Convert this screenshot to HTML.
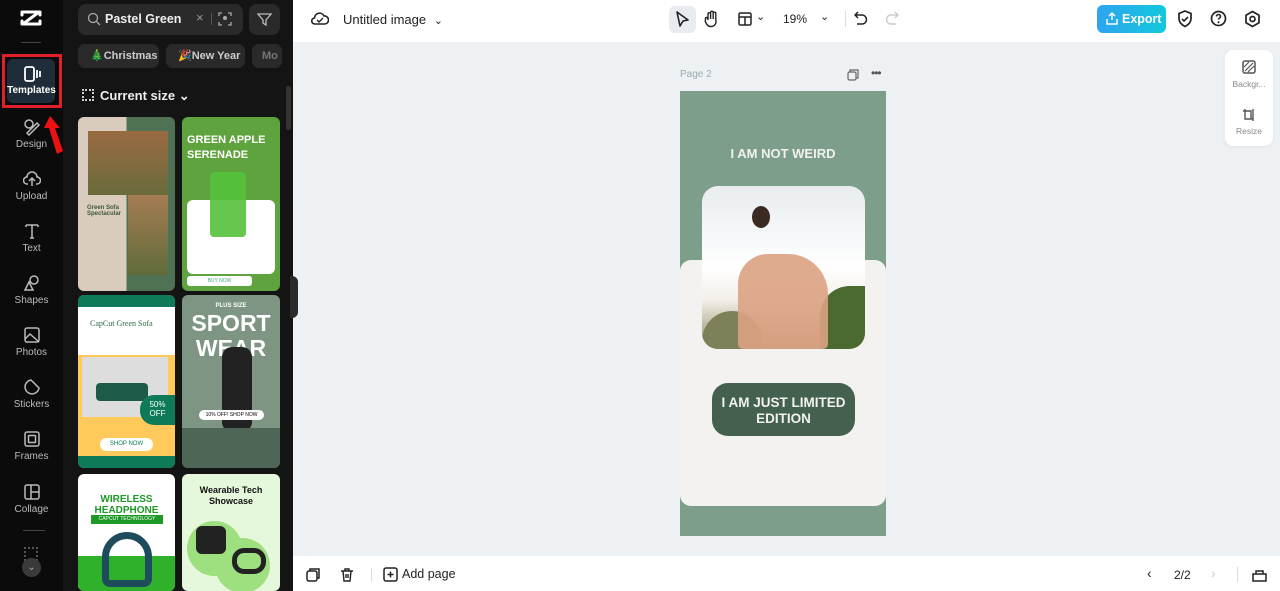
<!DOCTYPE html>
<html><head><meta charset="utf-8"><style>
*{box-sizing:border-box;margin:0;padding:0}
body{width:1280px;height:591px;overflow:hidden;font-family:"Liberation Sans",sans-serif;background:#eef1f4;position:relative}
.a{position:absolute}
.side{left:0;top:0;width:63px;height:591px;background:#0b0b0b}
.panel{left:63px;top:0;width:230px;height:591px;background:#141414}
.nav{position:absolute;left:0;width:63px;text-align:center;color:#bbb;font-size:10px}
.nav svg{display:block;margin:0 auto 3px}
.chip{position:absolute;top:44px;height:24px;background:#2a2a2a;border-radius:7px;color:#ccc;font-size:11px;font-weight:bold;line-height:24px;padding-left:12px}
.card{position:absolute;border-radius:6px;overflow:hidden}
.top{left:293px;top:0;width:987px;height:42px;background:#fff}
.bot{left:293px;top:556px;width:987px;height:35px;background:#fff}
</style></head><body>
<div class="a side"></div>
<div class="a panel"></div>
<!-- logo -->
<svg class="a" style="left:19px;top:9px" width="24" height="18" viewBox="0 0 24 18"><path d="M4 3h16L4 15h16" stroke="#fff" stroke-width="3" fill="none" stroke-linejoin="round"/><path d="M3 3v3M21 3v3M3 15v-3M21 15v-3" stroke="#fff" stroke-width="3" stroke-linecap="round"/></svg>
<div class="a" style="left:21px;top:42px;width:20px;height:1px;background:#444"></div>
<!-- templates active -->
<div class="a" style="left:2px;top:54px;width:60px;height:54px;border:3px solid #e0202a"></div>
<div class="a" style="left:7px;top:59px;width:48px;height:44px;background:#1f2d3a;border-radius:6px"></div>
<div class="nav" style="top:66px;color:#fff;font-weight:bold"><svg width="18" height="16" viewBox="0 0 18 16"><rect x="2" y="1" width="9" height="14" rx="2" stroke="#fff" stroke-width="1.8" fill="none"/><path d="M14 4v8M17 5v6" stroke="#fff" stroke-width="1.8"/></svg>Templates</div>
<svg class="a" style="left:44px;top:114px" width="24" height="42" viewBox="0 0 24 42"><path d="M6 2L0 14h5l8 26 6-3-8-23h5z" fill="#e11"/></svg>
<div class="nav" style="top:118px;width:63px">
<svg width="18" height="18" viewBox="0 0 18 18"><circle cx="6" cy="6" r="4" stroke="#bbb" stroke-width="1.5" fill="none"/><path d="M4 15l10-10 2 2-10 10z" stroke="#bbb" stroke-width="1.5" fill="none"/></svg>Design</div>
<div class="nav" style="top:170px"><svg width="18" height="18" viewBox="0 0 18 18"><path d="M5 14H4a3 3 0 010-7 5 5 0 0110 0 3 3 0 010 7h-1M9 16V9M6 11l3-3 3 3" stroke="#bbb" stroke-width="1.5" fill="none"/></svg>Upload</div>
<div class="nav" style="top:222px"><svg width="18" height="18" viewBox="0 0 18 18"><path d="M3 3h12M9 3v13M3 3v2M15 3v2M7 16h4" stroke="#bbb" stroke-width="1.5" fill="none"/></svg>Text</div>
<div class="nav" style="top:274px"><svg width="18" height="18" viewBox="0 0 18 18"><circle cx="11" cy="6" r="4" stroke="#bbb" stroke-width="1.5" fill="none"/><path d="M6 8l-4 8h8z" stroke="#bbb" stroke-width="1.5" fill="none"/></svg>Shapes</div>
<div class="nav" style="top:326px"><svg width="18" height="18" viewBox="0 0 18 18"><rect x="2" y="2" width="14" height="14" rx="2" stroke="#bbb" stroke-width="1.5" fill="none"/><path d="M2 13l5-5 9 8" stroke="#bbb" stroke-width="1.5" fill="none"/></svg>Photos</div>
<div class="nav" style="top:378px"><svg width="18" height="18" viewBox="0 0 18 18"><path d="M16 10A7 7 0 118 2z" stroke="#bbb" stroke-width="1.5" fill="none"/></svg>Stickers</div>
<div class="nav" style="top:430px"><svg width="18" height="18" viewBox="0 0 18 18"><rect x="2" y="2" width="14" height="14" rx="2" stroke="#bbb" stroke-width="1.5" fill="none"/><rect x="5.5" y="5.5" width="7" height="7" rx="1" stroke="#bbb" stroke-width="1.5" fill="none"/></svg>Frames</div>
<div class="nav" style="top:483px"><svg width="18" height="18" viewBox="0 0 18 18"><rect x="2" y="2" width="14" height="14" rx="2" stroke="#bbb" stroke-width="1.5" fill="none"/><path d="M8 2v14M8 9h8" stroke="#bbb" stroke-width="1.5"/></svg>Collage</div>
<div class="a" style="left:23px;top:530px;width:22px;height:1px;background:#444"></div>
<div class="a" style="left:24px;top:547px;width:14px;height:14px;border:2px dotted #555"></div>
<div class="a" style="left:22px;top:558px;width:19px;height:19px;border-radius:50%;background:#3a3a3a;color:#aaa;font-size:10px;text-align:center;line-height:19px">⌄</div>
<!-- search -->
<div class="a" style="left:78px;top:4px;width:165px;height:31px;background:#2a2a2a;border-radius:8px"></div>
<svg class="a" style="left:87px;top:12px" width="14" height="14" viewBox="0 0 14 14"><circle cx="6" cy="6" r="4.5" stroke="#aaa" stroke-width="1.3" fill="none"/><path d="M9.5 9.5L13 13" stroke="#aaa" stroke-width="1.3"/></svg>
<div class="a" style="left:105px;top:12px;color:#eee;font-size:12.5px;font-weight:bold">Pastel Green</div>
<div class="a" style="left:196px;top:10px;color:#999;font-size:13px">×</div>
<div class="a" style="left:211px;top:13px;width:1px;height:12px;background:#555"></div>
<svg class="a" style="left:218px;top:12px" width="14" height="14" viewBox="0 0 14 14"><path d="M1 4V1h3M10 1h3v3M13 10v3h-3M4 13H1v-3" stroke="#aaa" stroke-width="1.3" fill="none"/><circle cx="7" cy="6" r="2" fill="#aaa"/></svg>
<div class="a" style="left:249px;top:4px;width:31px;height:31px;background:#2a2a2a;border-radius:8px"></div>
<svg class="a" style="left:257px;top:12px" width="15" height="15" viewBox="0 0 15 15"><path d="M1 2h13l-5 6v5l-3-2V8z" stroke="#bbb" stroke-width="1.3" fill="none"/></svg>
<div class="chip" style="left:78px;width:81px">🎄Christmas</div>
<div class="chip" style="left:166px;width:79px">🎉New Year</div>
<div class="chip" style="left:252px;width:30px;color:#777;padding-left:10px">Mo</div>
<div class="a" style="left:82px;top:89px;width:12px;height:12px;border:2px dotted #ccc"></div>
<div class="a" style="left:100px;top:88px;color:#eee;font-size:13px;font-weight:bold">Current size ⌄</div>
<div class="a" style="left:286px;top:86px;width:5px;height:44px;background:#333;border-radius:3px"></div>
<div class="a" style="left:290px;top:276px;width:8px;height:42px;background:#2a2a2a;border-radius:0 6px 6px 0"></div>
<!-- cards -->
<div class="card" style="left:78px;top:117px;width:97px;height:174px;background:linear-gradient(90deg,#d9cbbd 50%,#4f7254 50%)">
 <div class="a" style="left:10px;top:14px;width:80px;height:64px;background:linear-gradient(#9a6b43,#6a6b3c)"></div>
 <div class="a" style="left:50px;top:78px;width:40px;height:80px;background:linear-gradient(#a67c54,#5f6c3a)"></div>
 <div class="a" style="left:9px;top:88px;font-size:6px;font-weight:bold;color:#3c5a3c">Green Sofa<br>Spectacular</div>
</div>
<div class="card" style="left:182px;top:117px;width:98px;height:174px;background:#5ea33d">
 <div class="a" style="left:5px;top:16px;color:#fff;font-size:11px;font-weight:bold;line-height:15px">GREEN APPLE<br>SERENADE</div>
 <div class="a" style="left:5px;top:83px;width:88px;height:74px;background:#fff;border-radius:6px"></div>
 <div class="a" style="left:28px;top:55px;width:36px;height:65px;background:#54c13a;border-radius:4px;opacity:.9"></div>
 <div class="a" style="left:5px;top:159px;width:65px;height:10px;background:#fff;border-radius:3px;font-size:5px;text-align:center;line-height:10px;color:#4a8">BUY NOW</div>
</div>
<div class="card" style="left:78px;top:295px;width:97px;height:173px;background:#ffc95c">
 <div class="a" style="left:0;top:0;width:97px;height:12px;background:#0e7a5a"></div>
 <div class="a" style="left:0;top:12px;width:97px;height:48px;background:#fff"></div>
 <div class="a" style="left:12px;top:24px;color:#2a6b45;font-size:8px;font-family:'Liberation Serif',serif">CapCut Green Sofa</div>
 <div class="a" style="left:4px;top:62px;width:86px;height:60px;background:#ddd"></div>
 <div class="a" style="left:18px;top:88px;width:52px;height:18px;background:#1e5a4a;border-radius:4px"></div>
 <div class="a" style="left:62px;top:100px;width:35px;height:30px;background:#0e7a5a;border-radius:14px 0 0 14px;color:#fff;font-size:8px;text-align:center;padding-top:5px">50%<br>OFF</div>
 <div class="a" style="left:22px;top:143px;width:53px;height:13px;background:#fff;border-radius:7px;font-size:6px;color:#0e7a5a;text-align:center;line-height:13px">SHOP NOW</div>
 <div class="a" style="left:0;top:161px;width:97px;height:12px;background:#0e7a5a"></div>
</div>
<div class="card" style="left:182px;top:295px;width:98px;height:173px;background:#7d9582">
 <div class="a" style="left:0;top:8px;width:98px;text-align:center;color:#fff;font-size:6px;font-weight:bold">PLUS SIZE</div>
 <div class="a" style="left:0;top:16px;width:98px;text-align:center;color:#fff;font-size:23px;font-weight:bold;line-height:25px">SPORT<br>WEAR</div>
 <div class="a" style="left:40px;top:52px;width:30px;height:85px;background:#222;border-radius:10px"></div>
 <div class="a" style="left:17px;top:115px;width:65px;height:10px;background:#fff;border-radius:5px;font-size:5px;text-align:center;line-height:10px">10% OFF! SHOP NOW</div>
 <div class="a" style="left:0;top:133px;width:98px;height:40px;background:#4e6655"></div>
</div>
<div class="card" style="left:78px;top:474px;width:97px;height:117px;background:#fff">
 <div class="a" style="left:0;top:20px;width:97px;text-align:center;color:#1c9a25;font-size:10px;font-weight:bold;line-height:11px">WIRELESS<br>HEADPHONE</div>
 <div class="a" style="left:13px;top:41px;width:72px;height:9px;background:#1c9a25;color:#fff;font-size:5px;text-align:center;line-height:9px">CAPCUT TECHNOLOGY</div>
 <div class="a" style="left:0;top:82px;width:97px;height:35px;background:#2fb12c"></div>
 <div class="a" style="left:24px;top:58px;width:50px;height:55px;border:7px solid #1f4c5c;border-radius:25px 25px 8px 8px"></div>
</div>
<div class="card" style="left:182px;top:474px;width:98px;height:117px;background:#e6f8dc">
 <div class="a" style="left:0;top:11px;width:98px;text-align:center;color:#111;font-size:9px;font-weight:bold;line-height:11px">Wearable Tech<br>Showcase</div>
 <div class="a" style="left:5px;top:47px;width:55px;height:55px;border-radius:50%;background:#9ee080"></div>
 <div class="a" style="left:33px;top:64px;width:55px;height:55px;border-radius:50%;background:#9ee080"></div>
 <div class="a" style="left:14px;top:52px;width:30px;height:28px;background:#222;border-radius:6px"></div>
 <div class="a" style="left:50px;top:74px;width:34px;height:26px;border:5px solid #222;border-radius:12px"></div>
</div>
<!-- top bar -->
<div class="a top"></div>
<svg class="a" style="left:311px;top:10px" width="18" height="17" viewBox="0 0 18 17"><path d="M5 14H4a3 3 0 01-.5-6A5 5 0 0113 6a3.5 3.5 0 011 8H5z" stroke="#222" stroke-width="1.6" fill="none"/><path d="M6 10l2 2 4-4" stroke="#222" stroke-width="1.4" fill="none"/></svg>
<div class="a" style="left:343px;top:12px;font-size:13px;color:#222">Untitled image <span style="font-size:11px;margin-left:4px">⌄</span></div>
<div class="a" style="left:669px;top:6px;width:27px;height:27px;background:#e8ebef;border-radius:6px"></div>
<svg class="a" style="left:675px;top:11px" width="15" height="17" viewBox="0 0 15 17"><path d="M2 1l11 8-5 1-3 5z" stroke="#222" stroke-width="1.6" fill="none" stroke-linejoin="round"/></svg>
<svg class="a" style="left:704px;top:10px" width="16" height="18" viewBox="0 0 16 18"><path d="M4 10V4a1.3 1.3 0 012.6 0v5V2.5a1.3 1.3 0 012.6 0V9V3.5a1.3 1.3 0 012.6 0V10a5 5 0 01-5 6.5c-3 0-4-2-5.5-5L1.5 9a1.2 1.2 0 012-1.2z" stroke="#222" stroke-width="1.4" fill="none"/></svg>
<svg class="a" style="left:738px;top:12px" width="14" height="14" viewBox="0 0 14 14"><rect x="1" y="1" width="12" height="12" rx="1.5" stroke="#222" stroke-width="1.5" fill="none"/><path d="M1 5h12M7 5v8" stroke="#222" stroke-width="1.5"/></svg>
<div class="a" style="left:756px;top:10px;font-size:11px;color:#222">⌄</div>
<div class="a" style="left:783px;top:12px;font-size:12px;color:#222">19%</div>
<div class="a" style="left:820px;top:10px;font-size:11px;color:#222">⌄</div>
<div class="a" style="left:845px;top:11px;width:1px;height:16px;background:#ddd"></div>
<svg class="a" style="left:854px;top:11px" width="14" height="16" viewBox="0 0 14 16"><path d="M4 1L1 4l3 3M1 4h7a4.5 4.5 0 010 9H3" stroke="#222" stroke-width="1.5" fill="none"/></svg>
<svg class="a" style="left:885px;top:11px" width="14" height="16" viewBox="0 0 14 16"><path d="M10 1l3 3-3 3M13 4H6a4.5 4.5 0 000 9h5" stroke="#ccc" stroke-width="1.5" fill="none"/></svg>
<div class="a" style="left:1097px;top:5px;width:69px;height:28px;border-radius:6px;background:linear-gradient(90deg,#2fa4f0,#12c8dc);color:#fff;font-size:12.5px;font-weight:bold;line-height:28px;padding-left:25px">Export</div>
<svg class="a" style="left:1106px;top:12px" width="12" height="13" viewBox="0 0 12 13"><path d="M6 8V1M3 4l3-3 3 3M1 7v5h10V7" stroke="#fff" stroke-width="1.4" fill="none"/></svg>
<svg class="a" style="left:1177px;top:10px" width="16" height="18" viewBox="0 0 16 18"><path d="M8 1l6 2.5v5c0 4-3 6.5-6 8-3-1.5-6-4-6-8v-5z" stroke="#222" stroke-width="1.7" fill="none"/><path d="M5 9l2 2 4-4" stroke="#222" stroke-width="1.6" fill="none"/></svg>
<svg class="a" style="left:1210px;top:10px" width="17" height="17" viewBox="0 0 17 17"><circle cx="8.5" cy="8.5" r="7" stroke="#222" stroke-width="1.7" fill="none"/><path d="M6.5 6.5a2 2 0 114 0c0 1.5-2 1.5-2 3" stroke="#222" stroke-width="1.6" fill="none"/><circle cx="8.5" cy="12.3" r="1" fill="#222"/></svg>
<svg class="a" style="left:1244px;top:10px" width="17" height="18" viewBox="0 0 17 18"><path d="M8.5 1.5l6.5 3.7v7.6L8.5 16.5 2 12.8V5.2z" stroke="#222" stroke-width="1.7" fill="none"/><circle cx="8.5" cy="9" r="2.5" stroke="#222" stroke-width="1.7" fill="none"/></svg>
<!-- right float -->
<div class="a" style="left:1225px;top:50px;width:48px;height:96px;background:#fff;border-radius:8px;box-shadow:0 1px 4px rgba(0,0,0,.06)"></div>
<svg class="a" style="left:1242px;top:60px" width="14" height="14" viewBox="0 0 14 14"><rect x="1" y="1" width="12" height="12" rx="2" stroke="#555" stroke-width="1.5" fill="none"/><path d="M3 11l8-8M6 12l6-6M2 7l5-5" stroke="#555" stroke-width="1.2"/></svg>
<div class="a" style="left:1225px;top:79px;width:48px;text-align:center;font-size:8.5px;color:#888">Backgr...</div>
<svg class="a" style="left:1242px;top:108px" width="14" height="14" viewBox="0 0 14 14"><path d="M3 1v10h8M1 3h8v8M11 1v12" stroke="#555" stroke-width="1.4" fill="none"/></svg>
<div class="a" style="left:1225px;top:126px;width:48px;text-align:center;font-size:8.5px;color:#888">Resize</div>
<!-- page -->
<div class="a" style="left:680px;top:69px;font-size:10px;color:#9aa">Page 2</div>
<svg class="a" style="left:847px;top:69px" width="12" height="12" viewBox="0 0 12 12"><rect x="1" y="3" width="8" height="8" rx="1.5" stroke="#666" stroke-width="1.2" fill="none"/><path d="M3 3V1h8v8H9" stroke="#666" stroke-width="1.2" fill="none"/></svg>
<div class="a" style="left:871px;top:66px;font-size:12px;color:#555;letter-spacing:-1px">•••</div>
<div class="a" style="left:680px;top:91px;width:206px;height:445px;background:#7d9e8b"></div>
<div class="a" style="left:680px;top:260px;width:206px;height:246px;background:#f3f2f0;border-radius:11px"></div>
<div class="a" style="left:680px;top:146px;width:206px;text-align:center;color:#f1f1ef;font-size:13px;font-weight:bold">I AM NOT WEIRD</div>
<div class="a" style="left:702px;top:186px;width:163px;height:163px;border-radius:16px;overflow:hidden;background:linear-gradient(#e8ecef 0%,#fff 50%,#f3efe9 70%,#8c8a5f 100%)">
 <div class="a" style="left:0;top:125px;width:60px;height:40px;background:#7d8058;border-radius:40px 40px 0 0"></div>
 <div class="a" style="left:118px;top:100px;width:45px;height:63px;background:#4b6a30;border-radius:30px 0 0 0"></div>
 <div class="a" style="left:36px;top:68px;width:90px;height:95px;background:#dba283;border-radius:30px 40px 5px 5px;opacity:.9"></div>
 <div class="a" style="left:50px;top:20px;width:18px;height:22px;background:#3b2a22;border-radius:50%"></div>
</div>
<div class="a" style="left:712px;top:383px;width:143px;height:53px;background:#44614f;border-radius:16px;color:#f2f2f0;font-size:13.5px;font-weight:bold;text-align:center;padding-top:12px;line-height:16px">I AM JUST LIMITED<br>EDITION</div>
<!-- bottom bar -->
<div class="a bot"></div>
<svg class="a" style="left:306px;top:568px" width="14" height="14" viewBox="0 0 14 14"><rect x="1" y="3" width="10" height="10" rx="2" stroke="#222" stroke-width="1.5" fill="none"/><path d="M4 3V1h9v9h-2" stroke="#222" stroke-width="1.5" fill="none"/></svg>
<svg class="a" style="left:340px;top:568px" width="14" height="14" viewBox="0 0 14 14"><path d="M1 3h12M5 3V1h4v2M3 3l1 10h6l1-10M6 6v4M8 6v4" stroke="#222" stroke-width="1.4" fill="none"/></svg>
<div class="a" style="left:371px;top:568px;width:1px;height:14px;background:#ddd"></div>
<svg class="a" style="left:383px;top:567px" width="15" height="15" viewBox="0 0 15 15"><rect x="1" y="1" width="13" height="13" rx="2" stroke="#222" stroke-width="1.5" fill="none"/><path d="M7.5 4.5v6M4.5 7.5h6" stroke="#222" stroke-width="1.5"/></svg>
<div class="a" style="left:402px;top:567px;font-size:12.5px;color:#222">Add page</div>
<div class="a" style="left:1147px;top:565px;font-size:14px;color:#222">‹</div>
<div class="a" style="left:1174px;top:568px;font-size:12px;color:#222">2/2</div>
<div class="a" style="left:1211px;top:565px;font-size:14px;color:#ccc">›</div>
<div class="a" style="left:1237px;top:567px;width:1px;height:15px;background:#ddd"></div>
<svg class="a" style="left:1252px;top:568px" width="15" height="14" viewBox="0 0 15 14"><path d="M1 6h13v7H1zM4 6V3h7v3" stroke="#222" stroke-width="1.5" fill="none"/></svg>
</body></html>
